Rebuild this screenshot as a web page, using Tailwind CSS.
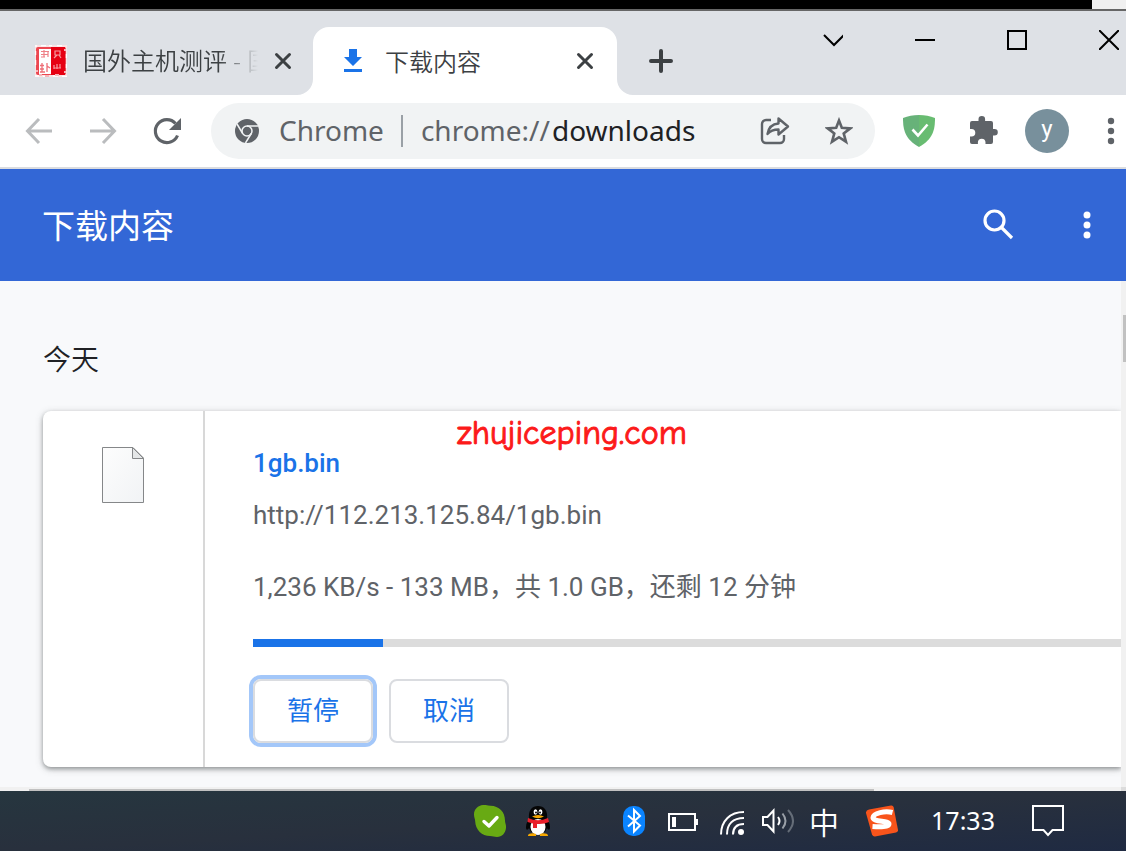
<!DOCTYPE html>
<html lang="zh-CN">

<head>
  <meta charset="UTF-8" />
  <meta name="viewport" content="width=device-width, initial-scale=1.0" />
  <title>下载内容</title>
  <script src="https://cdn.jsdelivr.net/npm/@tailwindcss/browser@4"></script>
</head>

<body class="min-h-screen flex flex-col overflow-x-hidden bg-[#f8f9fb] font-['Open_Sans','Noto_Sans_CJK_SC',sans-serif]">
  <!-- desktop edge above the window -->
  <div class="flex h-[11px] bg-black border-b-2 border-[#666]">
    <div class="ml-auto w-[34px] bg-[#f0f0f0]"></div>
  </div>

  <!-- tab strip -->
  <div class="flex items-end h-[84px] bg-[#dee1e6] text-[#3c4043]">
    <div class="flex items-center w-[313px] h-[68px] pl-[35px]">
      <svg class="w-8 h-8 shrink-0" viewBox="0 0 32 32">
        <rect width="32" height="32" fill="#fbe3e4" />
        <rect x="1" y="2" width="30" height="28" rx="2" fill="#ec4650" />
        <rect x="16" y="2" width="14" height="28" fill="#e60012" />
        <rect x="4" y="4" width="12" height="25" fill="#fff" />
        <path d="M6 6.500h8M6 9.500h7M9 5v7M13 6v6M6 12h4" stroke="#ee8087" stroke-width="1.200" fill="none" />
        <path d="M5 20.500h4M7 18v9M5 24h4M5 27h5M12 18v9M12 21l3 2" stroke="#ee6f77" stroke-width="1.300" fill="none" />
        <path d="M20 6h5v4h-5zM19 13l3-3M24 10l2 3M19 20v4M22 19v5M25 19v4M19 23h7" stroke="#f79aa0" stroke-width="1.200" fill="none" />
        <path d="M0 31h4M8 31.500h5M18 31h5M27 31.500h5M0 1h2M6 .5h5M14 .5h3M22 .5h5M.5 6v4M.5 15v5M31.500 9v4M31.500 19v4" stroke="#fff" stroke-width="1.500" />
        <path d="M4 30h3M10 31h4M20 30h4M1 26h2M29 27h2M29 5h2" stroke="#f5b5b9" stroke-width="2" />
      </svg>
      <div class="ml-4 w-[175px] overflow-hidden whitespace-nowrap text-2xl font-['Noto_Sans','Noto_Sans_CJK_SC',sans-serif] font-[350] [mask-image:linear-gradient(to_right,#000_78%,transparent)]">国外主机测评 - 国</div>
      <button type="button" aria-label="关闭" class="ml-4">
        <svg class="w-[18px] h-[18px]" viewBox="0 0 18 18" stroke="#3c4043" stroke-width="3" stroke-linecap="round"><path d="M2.500 2.500l13 13M15.500 2.500l-13 13" /></svg>
      </button>
    </div>
    <div class="relative flex items-center w-[304px] h-[68px] pl-[30px] bg-white rounded-t-2xl">
      <svg class="absolute bottom-0 -left-4 w-4 h-4" viewBox="0 0 16 16"><path d="M16 0v16H0A16 16 0 0 0 16 0z" fill="#fff" /></svg>
      <svg class="absolute bottom-0 -right-4 w-4 h-4" viewBox="0 0 16 16"><path d="M0 0v16h16A16 16 0 0 1 0 0z" fill="#fff" /></svg>
      <svg class="w-5 h-6" viewBox="0 0 20 24" fill="#1a73e8"><path d="M6 0h8v8h5l-9 9-9-9h5zM1 20h18v3H1z" /></svg>
      <div class="ml-[22px] w-[191px] text-2xl font-['Noto_Sans_CJK_SC',sans-serif] font-[350]">下载内容</div>
      <button type="button" aria-label="关闭">
        <svg class="w-[18px] h-[18px]" viewBox="0 0 18 18" stroke="#3c4043" stroke-width="3" stroke-linecap="round"><path d="M2.500 2.500l13 13M15.500 2.500l-13 13" /></svg>
      </button>
    </div>
    <button type="button" aria-label="新标签页" class="flex items-center h-[68px] ml-8">
      <svg class="w-6 h-6" viewBox="0 0 24 24" stroke="#3c4043" stroke-width="4" stroke-linecap="round"><path d="M12 2v20M2 12h20" /></svg>
    </button>
    <div class="flex items-center self-start gap-[72px] h-[58px] ml-auto pr-[7px]">
      <button type="button" aria-label="搜索标签页"><svg class="w-5 h-5" viewBox="0 0 20 20" fill="none" stroke="#000" stroke-width="2"><path d="M1 5l10 10L21 5" /></svg></button>
      <button type="button" aria-label="最小化"><svg class="w-5 h-5" viewBox="0 0 20 20" stroke="#000" stroke-width="2"><path d="M0 10h20" /></svg></button>
      <button type="button" aria-label="最大化"><svg class="w-5 h-5" viewBox="0 0 20 20" fill="none" stroke="#000" stroke-width="2"><path d="M1 1h18v18H1z" /></svg></button>
      <button type="button" aria-label="关闭窗口"><svg class="w-5 h-5" viewBox="0 0 20 20" stroke="#000" stroke-width="2"><path d="M0 0l20 20M20 0L0 20" /></svg></button>
    </div>
  </div>

  <!-- toolbar -->
  <div class="flex items-center h-[74px] pl-[23px] pr-[11px] bg-white border-b-2 border-[#dadce0]">
    <div class="flex gap-8">
      <button type="button" aria-label="后退"><svg class="w-8 h-8" viewBox="0 0 32 32" fill="none" stroke="#babcbe" stroke-width="3"><path d="M29 16H5M16 4L4.500 16 16 28" /></svg></button>
      <button type="button" aria-label="前进"><svg class="w-8 h-8" viewBox="0 0 32 32" fill="none" stroke="#babcbe" stroke-width="3"><path d="M3 16h24M16 4l11.500 12L16 28" /></svg></button>
      <button type="button" aria-label="重新加载"><svg class="w-8 h-8" viewBox="0 0 32 32" fill="none"><path d="M26.500 20.500A11.500 11.500 0 1 1 24.500 8.500" stroke="#5f6368" stroke-width="3.200" /><path d="M30 3v12H18z" fill="#5f6368" /></svg></button>
    </div>
    <div class="flex flex-1 items-center min-w-0 h-14 ml-7 pl-6 pr-[22px] rounded-full bg-[#f1f3f4] text-[28px] text-[#5f6368] font-['Noto_Sans','Open_Sans',sans-serif]">
      <svg class="w-6 h-6 shrink-0" viewBox="0 0 24 24" fill="none">
        <circle cx="12" cy="12" r="12" fill="#5f6368" />
        <g stroke="#f1f3f4" stroke-width="1.500">
          <circle cx="12" cy="12" r="5" />
          <path d="M12 7h11M16.300 14.500L10.500 24M7.700 14.500L2 5" />
        </g>
      </svg>
      <span class="ml-5 pb-[2px]">Chrome</span>
      <span class="w-[2px] h-8 ml-[17px] mr-[18px] bg-[#9aa0a6]"></span>
      <label for="address" class="pb-[2px]">chrome://</label>
      <input id="address" type="text" value="downloads" class="flex-1 min-w-0 pb-[2px] pl-[2px] text-[#202124] outline-none" />
      <button type="button" aria-label="分享" class="mr-[35px]">
        <svg class="w-[30px] h-[30px]" viewBox="0 0 30 30" fill="none" stroke="#5f6368" stroke-width="2.400" stroke-linejoin="round"><path d="M11 4H6a4 4 0 0 0-4 4v15a4 4 0 0 0 4 4h14a4 4 0 0 0 4-4v-4" /><path d="M18.500 2.500l9.500 8-9.500 8v-5c-5 0-8 1-11 4.500C8.500 12 12 8 18.500 7.500z" /></svg>
      </button>
      <button type="button" aria-label="添加书签">
        <svg class="w-7 h-7" viewBox="0 0 28 28" fill="none" stroke="#5f6368" stroke-width="2.600"><path d="M14 3.500l2.800 7.300 8.400.6-6.500 5 2.300 8.300L14 20.200l-7 4.500 2.300-8.300-6.500-5 8.400-.6z" /></svg>
      </button>
    </div>
    <button type="button" aria-label="AdGuard" class="ml-7">
      <svg class="w-8 h-8" viewBox="0 0 32 32"><path d="M16 0C10 0 5 1 0 3c0 12 2 21 16 29z" fill="#67b279" /><path d="M16 0c6 0 11 1 16 3 0 12-2 21-16 29z" fill="#68bc71" /><path d="M9.500 14.500l5.500 6 9.500-11" fill="none" stroke="#fff" stroke-width="2.600" /></svg>
    </button>
    <button type="button" aria-label="扩展程序" class="ml-8">
      <svg class="w-8 h-8" viewBox="0 1 32 32" fill="#5f6368"><path d="M5 7h6.500V5.300a3.300 3.300 0 0 1 6.600 0V7H24a2 2 0 0 1 2 2v6h1.500a3.300 3.300 0 0 1 0 6.600H26V28a2 2 0 0 1-2 2h-5.500v-1.500a3.800 3.800 0 0 0-7.600 0V30H5a2 2 0 0 1-2-2v-5.500h1.500a3.800 3.800 0 0 0 0-7.600H3V9a2 2 0 0 1 2-2z" /></svg>
    </button>
    <button type="button" aria-label="个人资料" class="w-11 h-11 ml-[26px] rounded-full bg-[#78909c] text-white text-2xl leading-10 pb-1 font-['Roboto',sans-serif]">y</button>
    <button type="button" aria-label="菜单" class="ml-[38px]">
      <svg class="w-2 h-8" viewBox="0 0 8 32" fill="#5f6368"><circle cx="4" cy="6" r="3.200" /><circle cx="4" cy="16" r="3.200" /><circle cx="4" cy="26" r="3.200" /></svg>
    </button>
  </div>

  <!-- page header -->
  <header class="flex items-center h-28 pl-[42px] pr-[35px] bg-[#3367d6] text-white">
    <h1 class="text-[33px] font-['Noto_Sans_CJK_SC',sans-serif]">下载内容</h1>
    <button type="button" aria-label="搜索" class="ml-auto">
      <svg class="w-8 h-8" viewBox="1 1 32 32" fill="none" stroke="#fff" stroke-width="3.200"><circle cx="12.500" cy="12.500" r="9.500" /><path d="M19 19l11 11" /></svg>
    </button>
    <button type="button" aria-label="更多操作" class="ml-[68px]">
      <svg class="w-2 h-8" viewBox="0 0 8 32" fill="#fff"><circle cx="4" cy="6" r="3.500" /><circle cx="4" cy="16" r="3.500" /><circle cx="4" cy="26" r="3.500" /></svg>
    </button>
  </header>

  <div class="flex flex-1">
    <main class="flex-1 min-w-0 pt-[58px] pb-5 pl-[43px] overflow-hidden">
      <h2 class="text-[28px] leading-[38px] text-[#202124] font-[350] font-['Noto_Sans_CJK_SC',sans-serif]">今天</h2>
      <section class="relative flex mt-[34px] bg-white rounded-l-lg shadow-[0_2px_4px_rgba(60,64,67,0.45),0_2px_8px_rgba(60,64,67,0.2)] font-['Roboto','Noto_Sans_CJK_SC',sans-serif] text-[26px] leading-8 text-[#5f6368]">
        <div class="w-[162px] pt-9 pl-[59px] border-r-2 border-[#d8d8d8]">
          <svg class="w-[42px] h-14" viewBox="0 0 42 56">
            <defs><linearGradient id="paper" x2="1" y2="1"><stop stop-color="#fdfdfd" /><stop offset="1" stop-color="#f1f3f5" /></linearGradient></defs>
            <path d="M.5.5H31L41.500 11v44.500H.5z" fill="url(#paper)" stroke="#858789" />
            <path d="M30.500.5v11h11z" fill="#e4e6e7" stroke="#858789" />
          </svg>
        </div>
        <div class="flex-1 min-w-0 pt-9 pl-12 pb-6">
          <a href="#" class="block font-medium text-[#1a73e8]">1gb.bin</a>
          <div class="mt-5">http://112.213.125.84/1gb.bin</div>
          <div class="mt-10">1,236 KB/s - 133 MB，共 1.0 GB，还剩 12 分钟</div>
          <div role="progressbar" aria-valuenow="15" aria-label="下载进度" class="h-2 mt-9 bg-[#dcdcdc]">
            <div class="h-2 bg-[#1a73e8]" style="width: 15%"></div>
          </div>
          <div class="flex gap-4 mt-8 text-[#1a73e8]">
            <button type="button" class="w-[120px] h-16 rounded-lg border-2 border-[#dadce0] ring-4 ring-[#a3c7f9]">暂停</button>
            <button type="button" class="w-[120px] h-16 rounded-lg border-2 border-[#dadce0]">取消</button>
          </div>
        </div>
        <!-- watermark -->
        <div class="absolute top-1 left-[414px] text-[34px] leading-9 text-[#fc1a1a] [-webkit-text-stroke:1px_#fc1a1a] font-['Comic_Sans_MS','Comic_Neue','Open_Sans',sans-serif]">zhujiceping.com</div>
      </section>
    </main>
    <div class="w-[5px] pt-[34px] pl-[2px] bg-[#f1f1f1]">
      <div class="h-[47px] bg-[#c1c1c1]"></div>
    </div>
  </div>
  <div class="flex h-1 bg-[#f1f1f1]">
    <div class="w-3/4 h-[2px] mt-[2px] ml-[29px] bg-[#c1c1c1]"></div>
    <div class="w-[5px] ml-auto bg-[#dcdcdc]"></div>
  </div>

  <!-- taskbar -->
  <footer class="flex items-center justify-end h-[60px] pr-[54px] bg-linear-to-br from-[#26363f] via-[#28303d] to-[#1f2a42] text-white">
    <div class="flex justify-center w-12">
      <svg class="w-8 h-8" viewBox="0 0 32 32"><path d="M9 0c3-.5 5 .8 7.500.8C25 1 31 7 31 15.500c0 2.500 1.300 4 1 7.500-.5 5-4 9-9 9-3 0-4-1-7-1C8 31 1.500 25 1.200 16.500 1.200 14 0 12.500 0 9.500 0 4 4 .5 9 0z" fill="#68aa13" /><path d="M10 16.500l5 4.500 8-8.500" fill="none" stroke="#fff" stroke-width="3.400" stroke-linecap="round" stroke-linejoin="round" /></svg>
    </div>
    <div class="flex justify-center w-12">
      <svg class="w-8 h-8" viewBox="0 0 32 32">
        <path d="M4 22c0-4 2-6 3-8h18c1 2 3 4 3 8 0 4-2 3-3 1l-2 4H9l-2-4c-1 2-3 3-3-1z" fill="#050505" />
        <path d="M7 14C6 5 10 1 16 1s10 4 9 13z" fill="#050505" />
        <ellipse cx="16" cy="22" rx="7.500" ry="8" fill="#fff" />
        <ellipse cx="13.500" cy="7" rx="1.900" ry="2.700" fill="#fff" /><ellipse cx="18.500" cy="7" rx="1.900" ry="2.700" fill="#fff" />
        <circle cx="14" cy="7.500" r="1" fill="#111" /><circle cx="18" cy="7.500" r="1" fill="#111" />
        <path d="M10 11.500q6-3 12 0-6 3.500-12 0zM6 30.500c0-2 5-3 8-1.500v2H6zM26 30.500c0-2-5-3-8-1.500v2h8z" fill="#f7a800" />
        <path d="M6 13q10 4.500 20 0l1 4q-5 2.500-12 2v4h-4v-4.500L5.500 17z" fill="#e9202b" />
      </svg>
    </div>
    <div class="flex justify-center w-12 ml-12">
      <svg class="w-6 h-8" viewBox="0 0 24 32"><rect x="1" y="1" width="22" height="30" rx="10" fill="#0a84ff" /><path d="M6 10.500l12 10-6 6V5l6 6L6 21.500" fill="none" stroke="#fff" stroke-width="2" /></svg>
    </div>
    <div class="flex justify-center w-12">
      <svg class="w-8 h-8" viewBox="-1 -1 32 32"><path d="M2 8h26v16H2z" fill="none" stroke="#fff" stroke-width="2" /><path d="M5 11h4v10H5zM29 13h2v6h-2z" fill="#fff" /></svg>
    </div>
    <div class="flex justify-center w-12">
      <svg class="w-8 h-8" viewBox="-2 0 32 32" fill="none" stroke="#fff" stroke-width="2"><path d="M5 29.500C5 16 14 7 28 7M11 29.500C11 19 17 13 28 13M17 29.500C17 22 21 19 28 19" /><circle cx="25" cy="27" r="3" fill="#fff" stroke="none" /></svg>
    </div>
    <div class="flex justify-center w-12">
      <svg class="w-8 h-8" viewBox="0 0 32 32" fill="none" stroke="#fff" stroke-width="2"><path d="M1 12h4.500l6-6.500v21l-6-6.500H1z" /><path d="M16 12q3 4 0 8" /><path d="M20.500 8.500q6 7.500 0 15" stroke="#9aa0a8" /><path d="M26 5q10 11 0 22" stroke="#656d78" /></svg>
    </div>
    <div class="w-11 text-center text-[30px] leading-8 font-[350] font-['Noto_Sans_CJK_SC',sans-serif]">中</div>
    <div class="flex justify-center w-12 ml-3">
      <svg class="w-8 h-8" viewBox="0 0 32 32"><path d="M3 4.500L25 .5q2-.3 2.600 1.500L32 25q.2 2-2 2.500L9 31.500q-2 .2-3-2L0 8q-.3-2.500 3-3.500z" fill="#f8541b" /><path d="M26.500 7.500C19 5.500 7.500 8 7 12.500c-.3 4.500 16 3 16 6.500 0 3-9 3-16.500 2.500" fill="none" stroke="#fff" stroke-width="5" /></svg>
    </div>
    <time class="w-[118px] pb-[2px] pr-1 text-center text-[25px] leading-8 font-['Noto_Sans','Open_Sans',sans-serif]">17:33</time>
    <div class="flex justify-center w-12">
      <svg class="w-8 h-9" viewBox="0 0 32 36"><path d="M1 3h30v24H20.500L16 32l-4.500-5H1z" fill="none" stroke="#fff" stroke-width="2" /></svg>
    </div>
  </footer>
</body>

</html>
